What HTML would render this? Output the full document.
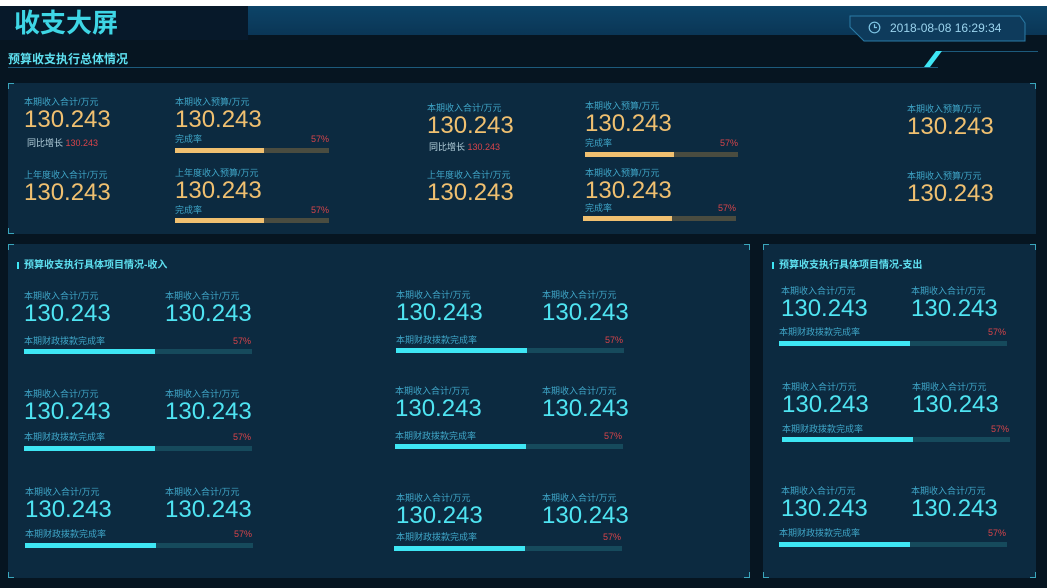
<!DOCTYPE html>
<html><head><meta charset="utf-8"><style>
*{margin:0;padding:0;box-sizing:border-box}
body{width:1047px;height:588px;overflow:hidden;background:#061521;font-family:"Liberation Sans","Noto Sans CJK SC",sans-serif;position:relative}
.a{position:absolute}
.l{position:absolute;font-size:9px;line-height:10px;color:#3fa6c8;white-space:nowrap}
.n{position:absolute;font-size:24px;line-height:24px;color:#4fe4f2;white-space:nowrap}
.g{color:#f0c070}
.p{position:absolute;font-size:9px;line-height:10px;color:#d9444a}
.grp{position:absolute;width:230px;height:64px}
.bar{position:absolute;height:5px;background:#164a5c}
.bar i{display:block;height:5px;background:#3ee6f4}
.gb{background:#4a4c40}.gb i{background:#f0c070}
.panel{position:absolute;background:#0c2a40}
.c{position:absolute;width:6px;height:6px;border-color:#3aa6bc;border-style:solid;border-width:0}
</style></head><body>
<div class="a" style="left:0;top:0;width:1047px;height:6px;background:#fff"></div>
<div class="a" style="left:248px;top:6px;width:799px;height:29px;background:linear-gradient(#0d4468,#0a3656)"></div>
<div class="a" style="left:0;top:6px;width:248px;height:34px;background:#07192a"></div>
<div class="a" style="left:14px;top:7px;font-size:26px;line-height:32px;font-weight:bold;color:#3ed6e6">收支大屏</div>
<svg class="a" style="left:848px;top:14px" width="180" height="30"><path d="M2 2H172L177 9V27H16L2 13Z" fill="#0e3b5c" stroke="#2a7ba6" stroke-width="1"/></svg>
<svg class="a" style="left:868px;top:21px" width="13" height="13"><circle cx="6.5" cy="6.5" r="5.3" fill="none" stroke="#7fc6e6" stroke-width="1.2"/><path d="M6.5 3.2V6.5H9" stroke="#7fc6e6" fill="none" stroke-width="1.2"/></svg>
<div class="a" style="left:890px;top:21px;font-size:12px;line-height:14px;color:#9bd4ee">2018-08-08 16:29:34</div>
<div class="a" style="left:8px;top:52px;font-size:12px;line-height:14px;font-weight:bold;color:#5ee0f0">预算收支执行总体情况</div>
<div class="a" style="left:8px;top:67px;width:930px;height:1px;background:#1c5a7c"></div>
<div class="a" style="left:940px;top:51px;width:98px;height:1px;background:#1c5a7c"></div>
<svg class="a" style="left:922px;top:50px" width="22" height="18"><path d="M14 1H20L8 17H2Z" fill="#3ee6f4"/></svg>

<div class="panel" style="left:8px;top:83px;width:1028px;height:151px"></div>
<div class="c" style="left:8px;top:83px;border-width:1px 0 0 1px"></div>
<div class="c" style="left:8px;top:228px;border-width:0 0 1px 1px"></div>
<div class="c" style="left:1030px;top:83px;border-width:1px 1px 0 0"></div>

<div class="l" style="left:24px;top:97px">本期收入合计/万元</div><div class="n g" style="left:24px;top:108px">130.243</div>
<div class="l" style="left:27px;top:138px;color:#b8d4e0">同比增长 <span style="color:#d9444a">130.243</span></div>
<div class="l" style="left:24px;top:170px">上年度收入合计/万元</div><div class="n g" style="left:24px;top:181px">130.243</div>
<div class="l" style="left:175px;top:97px">本期收入预算/万元</div><div class="n g" style="left:175px;top:108px">130.243</div>
<div class="l" style="left:175px;top:134px">完成率</div><div class="p" style="left:311px;top:134px">57%</div>
<div class="bar gb" style="left:175px;top:148px;width:154px"><i style="width:89px"></i></div>
<div class="l" style="left:175px;top:168px">上年度收入预算/万元</div><div class="n g" style="left:175px;top:179px">130.243</div>
<div class="l" style="left:175px;top:205px">完成率</div><div class="p" style="left:311px;top:205px">57%</div>
<div class="bar gb" style="left:175px;top:218px;width:154px"><i style="width:89px"></i></div>

<div class="l" style="left:427px;top:103px">本期收入合计/万元</div><div class="n g" style="left:427px;top:114px">130.243</div>
<div class="l" style="left:429px;top:142px;color:#b8d4e0">同比增长 <span style="color:#d9444a">130.243</span></div>
<div class="l" style="left:427px;top:170px">上年度收入合计/万元</div><div class="n g" style="left:427px;top:181px">130.243</div>
<div class="l" style="left:585px;top:101px">本期收入预算/万元</div><div class="n g" style="left:585px;top:112px">130.243</div>
<div class="l" style="left:585px;top:138px">完成率</div><div class="p" style="left:720px;top:138px">57%</div>
<div class="bar gb" style="left:585px;top:152px;width:153px"><i style="width:89px"></i></div>
<div class="l" style="left:585px;top:168px">本期收入预算/万元</div><div class="n g" style="left:585px;top:179px">130.243</div>
<div class="l" style="left:585px;top:203px">完成率</div><div class="p" style="left:718px;top:203px">57%</div>
<div class="bar gb" style="left:583px;top:216px;width:153px"><i style="width:89px"></i></div>

<div class="l" style="left:907px;top:104px">本期收入预算/万元</div><div class="n g" style="left:907px;top:115px">130.243</div>
<div class="l" style="left:907px;top:171px">本期收入预算/万元</div><div class="n g" style="left:907px;top:182px">130.243</div>

<div class="panel" style="left:8px;top:244px;width:742px;height:334px"></div>
<div class="c" style="left:8px;top:244px;border-width:1px 0 0 1px"></div>
<div class="c" style="left:744px;top:244px;border-width:1px 1px 0 0"></div>
<div class="c" style="left:8px;top:572px;border-width:0 0 1px 1px"></div>
<div class="c" style="left:744px;top:572px;border-width:0 1px 1px 0"></div>
<div class="a" style="left:17px;top:262px;width:2px;height:7px;background:#3ee6f4"></div>
<div class="a" style="left:24px;top:259px;font-size:10px;line-height:13px;font-weight:bold;color:#5ee0f0">预算收支执行具体项目情况-收入</div>

<div class="panel" style="left:763px;top:244px;width:273px;height:334px"></div>
<div class="c" style="left:763px;top:244px;border-width:1px 0 0 1px"></div>
<div class="c" style="left:1030px;top:244px;border-width:1px 1px 0 0"></div>
<div class="c" style="left:763px;top:572px;border-width:0 0 1px 1px"></div>
<div class="c" style="left:1030px;top:572px;border-width:0 1px 1px 0"></div>
<div class="a" style="left:772px;top:262px;width:2px;height:7px;background:#3ee6f4"></div>
<div class="a" style="left:779px;top:259px;font-size:10px;line-height:13px;font-weight:bold;color:#5ee0f0">预算收支执行具体项目情况-支出</div>

<div class="grp" style="left:24px;top:291px"><div class="l" style="left:0;top:0">本期收入合计/万元</div><div class="n" style="left:0;top:11px">130.243</div><div class="l" style="left:141px;top:0">本期收入合计/万元</div><div class="n" style="left:141px;top:11px">130.243</div><div class="l" style="left:0;top:45px">本期财政拨款完成率</div><div class="p" style="left:209px;top:45px">57%</div><div class="bar" style="left:0;top:58px;width:228px"><i style="width:131px"></i></div></div>
<div class="grp" style="left:24px;top:389px"><div class="l" style="left:0;top:0">本期收入合计/万元</div><div class="n" style="left:0;top:11px">130.243</div><div class="l" style="left:141px;top:0">本期收入合计/万元</div><div class="n" style="left:141px;top:11px">130.243</div><div class="l" style="left:0;top:43px">本期财政拨款完成率</div><div class="p" style="left:209px;top:43px">57%</div><div class="bar" style="left:0;top:57px;width:228px"><i style="width:131px"></i></div></div>
<div class="grp" style="left:25px;top:487px"><div class="l" style="left:0;top:0">本期收入合计/万元</div><div class="n" style="left:0;top:11px">130.243</div><div class="l" style="left:140px;top:0">本期收入合计/万元</div><div class="n" style="left:140px;top:11px">130.243</div><div class="l" style="left:0;top:42px">本期财政拨款完成率</div><div class="p" style="left:209px;top:42px">57%</div><div class="bar" style="left:0;top:56px;width:228px"><i style="width:131px"></i></div></div>

<div class="grp" style="left:396px;top:290px"><div class="l" style="left:0;top:0">本期收入合计/万元</div><div class="n" style="left:0;top:11px">130.243</div><div class="l" style="left:146px;top:0">本期收入合计/万元</div><div class="n" style="left:146px;top:11px">130.243</div><div class="l" style="left:0;top:45px">本期财政拨款完成率</div><div class="p" style="left:209px;top:45px">57%</div><div class="bar" style="left:0;top:58px;width:228px"><i style="width:131px"></i></div></div>
<div class="grp" style="left:395px;top:386px"><div class="l" style="left:0;top:0">本期收入合计/万元</div><div class="n" style="left:0;top:11px">130.243</div><div class="l" style="left:147px;top:0">本期收入合计/万元</div><div class="n" style="left:147px;top:11px">130.243</div><div class="l" style="left:0;top:45px">本期财政拨款完成率</div><div class="p" style="left:209px;top:45px">57%</div><div class="bar" style="left:0;top:58px;width:228px"><i style="width:131px"></i></div></div>
<div class="grp" style="left:396px;top:493px"><div class="l" style="left:0;top:0">本期收入合计/万元</div><div class="n" style="left:0;top:11px">130.243</div><div class="l" style="left:146px;top:0">本期收入合计/万元</div><div class="n" style="left:146px;top:11px">130.243</div><div class="l" style="left:0;top:39px">本期财政拨款完成率</div><div class="p" style="left:207px;top:39px">57%</div><div class="bar" style="left:-2px;top:53px;width:228px"><i style="width:131px"></i></div></div>

<div class="grp" style="left:781px;top:286px"><div class="l" style="left:0;top:0">本期收入合计/万元</div><div class="n" style="left:0;top:11px">130.243</div><div class="l" style="left:130px;top:0">本期收入合计/万元</div><div class="n" style="left:130px;top:11px">130.243</div><div class="l" style="left:-2px;top:41px">本期财政拨款完成率</div><div class="p" style="left:207px;top:41px">57%</div><div class="bar" style="left:-2px;top:55px;width:228px"><i style="width:131px"></i></div></div>
<div class="grp" style="left:782px;top:382px"><div class="l" style="left:0;top:0">本期收入合计/万元</div><div class="n" style="left:0;top:11px">130.243</div><div class="l" style="left:130px;top:0">本期收入合计/万元</div><div class="n" style="left:130px;top:11px">130.243</div><div class="l" style="left:0;top:42px">本期财政拨款完成率</div><div class="p" style="left:209px;top:42px">57%</div><div class="bar" style="left:0;top:55px;width:228px"><i style="width:131px"></i></div></div>
<div class="grp" style="left:781px;top:486px"><div class="l" style="left:0;top:0">本期收入合计/万元</div><div class="n" style="left:0;top:11px">130.243</div><div class="l" style="left:130px;top:0">本期收入合计/万元</div><div class="n" style="left:130px;top:11px">130.243</div><div class="l" style="left:-2px;top:42px">本期财政拨款完成率</div><div class="p" style="left:207px;top:42px">57%</div><div class="bar" style="left:-2px;top:56px;width:228px"><i style="width:131px"></i></div></div>
</body></html>
